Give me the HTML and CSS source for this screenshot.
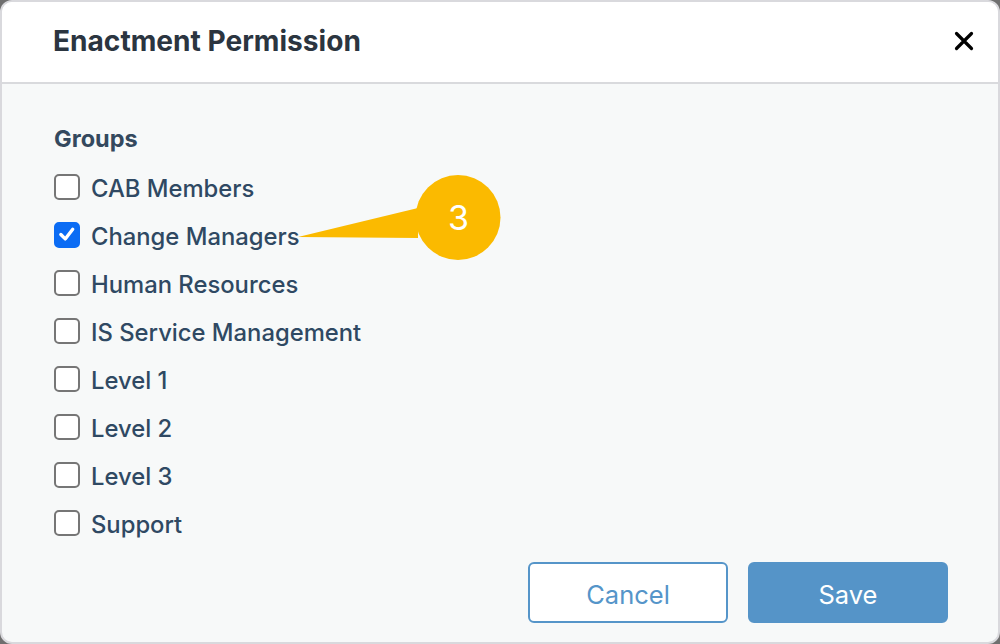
FILE: index.html
```html
<!DOCTYPE html>
<html>
<head>
<meta charset="utf-8">
<link rel="stylesheet" href="styles.css">
</head>
<body>
<div class="screen">
  <div class="dialog">
    <div class="header">
      <h1 class="title">Enactment Permission</h1>
      <svg class="close" width="20" height="20" viewBox="0 0 20 20"><path d="M2.5 2.5 L17.5 17.5 M17.5 2.5 L2.5 17.5" stroke="#000" stroke-width="3.2" stroke-linecap="round"/></svg>
    </div>
    <div class="body">
      <div class="group-label">Groups</div>
      <ul class="list">
        <li class="row"><span class="box"></span><span class="label">CAB Members</span></li>
        <li class="row"><span class="box checked"><svg width="25" height="25" viewBox="0 0 25 25"><path d="M5.5 12.5 L10.5 17.5 L19 6.5" fill="none" stroke="#fff" stroke-width="3.8" stroke-linecap="round" stroke-linejoin="round"/></svg></span><span class="label">Change Managers</span></li>
        <li class="row"><span class="box"></span><span class="label">Human Resources</span></li>
        <li class="row"><span class="box"></span><span class="label">IS Service Management</span></li>
        <li class="row"><span class="box"></span><span class="label">Level 1</span></li>
        <li class="row"><span class="box"></span><span class="label">Level 2</span></li>
        <li class="row"><span class="box"></span><span class="label">Level 3</span></li>
        <li class="row"><span class="box"></span><span class="label">Support</span></li>
      </ul>
      <div class="actions">
        <button class="btn btn-cancel">Cancel</button>
        <button class="btn btn-save">Save</button>
      </div>
    </div>
    <div class="callout">
      <svg width="220" height="100" viewBox="0 0 220 100">
        <path d="M0 62 L120 33 L120 63 Z" fill="#fbba00"/>
        <circle cx="160" cy="42.5" r="42.5" fill="#fbba00"/>
      </svg>
      <span class="callout-num">3</span>
    </div>
  </div>
</div>
</body>
</html>
```

FILE: styles.css
```css
* { box-sizing: border-box; }
html, body { margin: 0; padding: 0; }
body {
  width: 1000px;
  height: 644px;
  overflow: hidden;
  background: #6f6f6f;
  font-family: "Inter", "Helvetica Neue", Arial, sans-serif;
}
.screen { width: 1000px; height: 644px; }
.dialog {
  position: relative;
  width: 1000px;
  height: 644px;
  border: 2px solid #d9d9dd;
  border-radius: 12px;
  overflow: hidden;
  background: #f7f9f9;
  display: flex;
  flex-direction: column;
}
.header {
  height: 82px;
  flex: none;
  background: #fff;
  border-bottom: 2px solid #d9dadd;
  display: flex;
  align-items: center;
  justify-content: space-between;
  padding: 0 24px 0 51px;
}
.title {
  margin: 0;
  font-size: 28.1px;
  font-weight: 700;
  color: #2b3540;
  letter-spacing: 0;
  padding-bottom: 2px;
}
.close { display: block; margin-bottom: 2px; }
.body {
  flex: 1;
  padding: 40px 50px 0 52px;
  display: flex;
  flex-direction: column;
}
.group-label {
  font-size: 23.5px;
  font-weight: 700;
  color: #34495e;
  height: 30px;
  line-height: 30px;
  margin-bottom: 11px;
}
.list {
  list-style: none;
  margin: 0;
  padding: 0;
}
.row {
  height: 48px;
  display: flex;
  align-items: center;
  gap: 11px;
  color: #2f4963;
  font-size: 23.8px;
  font-weight: 500;
}
.box {
  width: 26px;
  height: 26px;
  border: 2px solid #767676;
  border-radius: 5px;
  background: #fff;
  display: flex;
  align-items: center;
  justify-content: center;
  margin-top: -5px;
  flex: none;
}
.box.checked {
  background: #0b6cf4;
  border-color: #0b6cf4;
}
.box.checked svg { display: block; }
.label { line-height: 30px; }
.actions {
  display: flex;
  justify-content: flex-end;
  gap: 20px;
  margin-top: 13px;
}
.btn {
  width: 200px;
  height: 61px;
  border-radius: 6px;
  font-family: inherit;
  font-size: 25.5px;
  padding: 4px 0 0 0;
  cursor: pointer;
}
.btn-cancel {
  background: #fff;
  border: 2px solid #5595c9;
  color: #5595c9;
}
.btn-save {
  background: #5594c8;
  border: 2px solid #5594c8;
  color: #fff;
}
.callout {
  position: absolute;
  left: 296px;
  top: 173px;
  width: 220px;
  height: 100px;
}
.callout svg { display: block; }
.callout-num {
  position: absolute;
  left: 118px;
  top: 0;
  width: 85px;
  height: 85px;
  display: flex;
  align-items: center;
  justify-content: center;
  color: #fff;
  font-size: 34px;
  font-weight: 400;
}
```
